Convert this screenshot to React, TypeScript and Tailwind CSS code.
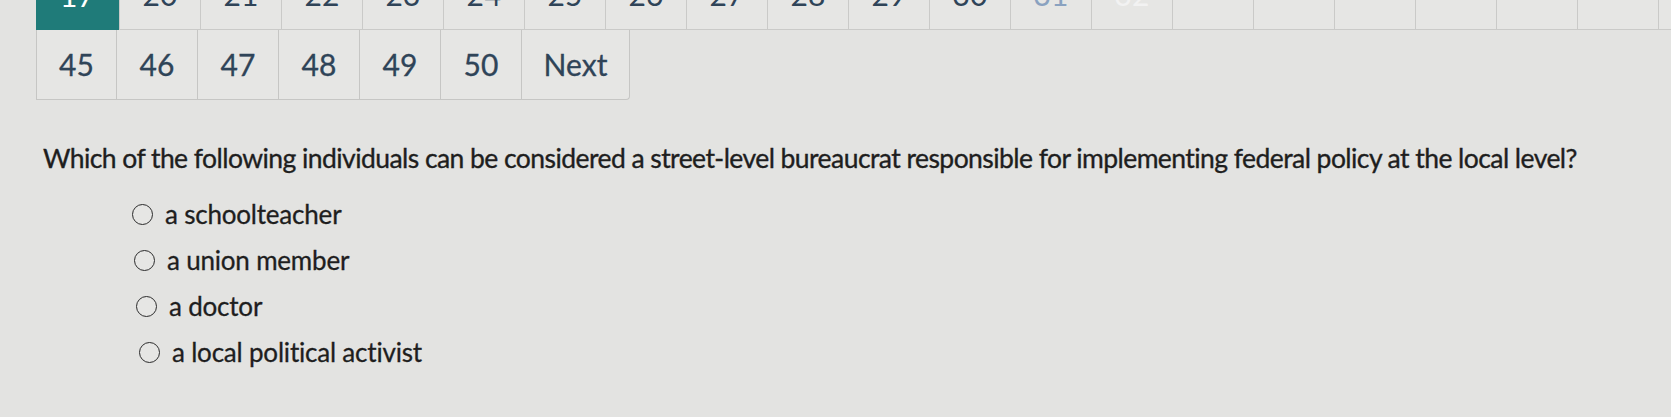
import React from "react";

const topLabels: { t: string; c: string }[] = [
  { t: "20", c: "text-[#2f4458]" },
  { t: "21", c: "text-[#2f4458]" },
  { t: "22", c: "text-[#2f4458]" },
  { t: "23", c: "text-[#2f4458]" },
  { t: "24", c: "text-[#2f4458]" },
  { t: "25", c: "text-[#2f4458]" },
  { t: "26", c: "text-[#2f4458]" },
  { t: "27", c: "text-[#2f4458]" },
  { t: "28", c: "text-[#2f4458]" },
  { t: "29", c: "text-[#2f4458]" },
  { t: "30", c: "text-[#2f4458]" },
  { t: "31", c: "text-[#8aa2c0]" },
  { t: "32", c: "text-[#f2f2f2]" },
  { t: "", c: "" },
  { t: "", c: "" },
  { t: "", c: "" },
  { t: "", c: "" },
  { t: "", c: "" },
  { t: "", c: "" },
  { t: "", c: "" },
];

const bottomLabels = ["45", "46", "47", "48", "49", "50"];

const options = [
  { t: "a schoolteacher", ml: "ml-0" },
  { t: "a union member", ml: "ml-[2px]" },
  { t: "a doctor", ml: "ml-[4px]" },
  { t: "a local political activist", ml: "ml-[7px]" },
];

export default function App() {
  return (
    <div
      className="w-[1671px] h-[417px] overflow-hidden bg-[#e3e3e1] text-[#222]"
      style={{ fontFamily: "Lato, 'Open Sans', sans-serif" }}
    >
      {/* pagination */}
      <div className="pl-[36px]">
        <div className="flex -mt-[40px] h-[70px]">
          <div className="w-[83px] h-[70px] shrink-0 bg-[#1f7b79] flex items-center justify-center text-[30px] text-white">
            17
          </div>
          {topLabels.map((l, i) => (
            <div
              key={i}
              className={`w-[81px] h-[70px] shrink-0 border-l border-b border-[#cacac8] bg-[#e6e6e4] flex items-center justify-center text-[30px] ${l.c}`}
            >
              {l.t}
            </div>
          ))}
        </div>
        <div className="flex">
          {bottomLabels.map((l, i) => (
            <div
              key={l}
              className={`w-[81px] h-[70px] border-b border-r border-[#c6c6c4] bg-[#e6e6e4] flex items-center justify-center text-[30px] text-[#2f4458] [-webkit-text-stroke:0.3px_#2f4458] ${i === 0 ? "border-l" : ""}`}
            >
              {l}
            </div>
          ))}
          <div className="w-[108px] h-[70px] border-b border-r border-[#c6c6c4] rounded-br-[4px] bg-[#e6e6e4] flex items-center justify-center text-[30px] text-[#2f4458] [-webkit-text-stroke:0.3px_#2f4458]">
            Next
          </div>
        </div>
      </div>

      {/* question */}
      <div className="pl-[43px] mt-[42px] text-[26.5px] leading-[32px] tracking-[-0.56px] text-[#1e1e1e] [-webkit-text-stroke:0.35px_#1e1e1e]">
        Which of the following individuals can be considered a street-level bureaucrat responsible for implementing federal policy at the local level?
      </div>

      <div className="pl-[132px] mt-[24px] flex flex-col gap-[14px]">
        {options.map((o) => (
          <label key={o.t} className={`flex items-center gap-[12px] h-[32px] ${o.ml}`}>
            <span className="w-[21px] h-[21px] rounded-full border-[1.8px] border-[#2b2b2b] bg-[#e6e6e4] shrink-0" />
            <span className="text-[26px] text-[#1e1e1e] leading-[32px] tracking-[-0.2px] [-webkit-text-stroke:0.3px_#1e1e1e]">{o.t}</span>
          </label>
        ))}
      </div>
    </div>
  );
}
